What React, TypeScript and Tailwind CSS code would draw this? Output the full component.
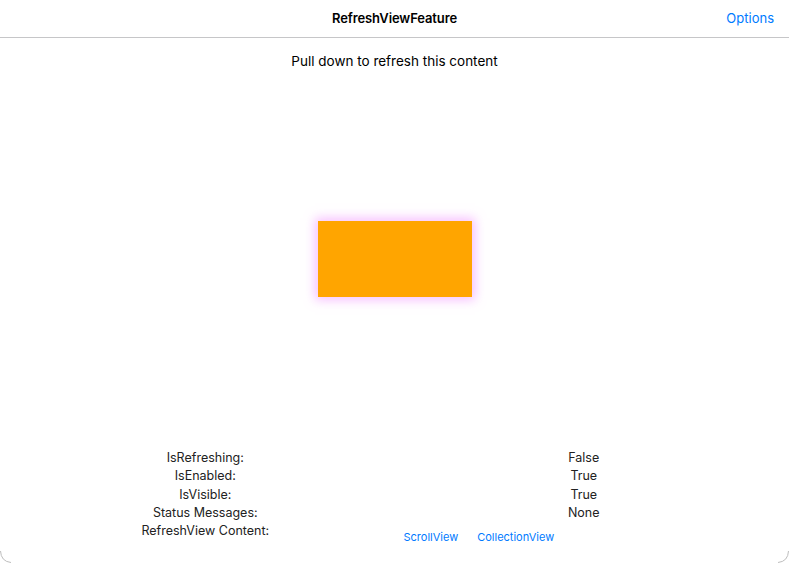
import React from "react";

export default function App() {
  const rows: [string, string][] = [
    ["IsRefreshing:", "False"],
    ["IsEnabled:", "True"],
    ["IsVisible:", "True"],
    ["Status Messages:", "None"],
  ];
  return (
    <div
      className="relative w-[789px] h-[563px] bg-white overflow-hidden flex flex-col text-[#1c1c1e]"
      style={{ fontFamily: "Inter, 'Liberation Sans', sans-serif" }}
    >
      <div className="h-[38px] shrink-0 border-b border-[#c6c6c8] flex items-center relative">
        <div className="absolute inset-0 flex items-center justify-center">
          <span className="text-[13px] font-semibold text-black tracking-[-0.1px]">RefreshViewFeature</span>
        </div>
        <div className="ml-auto pr-[15px] text-[13px] text-[#007aff]">Options</div>
      </div>
      <div className="mt-[14px] text-center text-[13.5px] leading-[18px] text-black">
        Pull down to refresh this content
      </div>
      <div className="mt-[151px] flex justify-center">
        <div className="w-[154px] h-[76px] bg-[#ffa500] shadow-[0_0_10px_3px_rgba(240,140,255,0.55)]" />
      </div>
      <div className="mt-[152px] px-4 grid grid-cols-2 text-[12.5px] text-[#222]">
        {rows.map(([l, v]) => (
          <React.Fragment key={l}>
            <div className="h-[18.3px] leading-[18.3px] text-center">{l}</div>
            <div className="h-[18.3px] leading-[18.3px] text-center">{v}</div>
          </React.Fragment>
        ))}
        <div className="h-[18.3px] leading-[18.3px] text-center">RefreshView Content:</div>
        <div className="flex items-center h-[30px] pl-[9px] gap-[19px] text-[11px] text-[#007aff]">
          <span>ScrollView</span>
          <span>CollectionView</span>
        </div>
      </div>
      <svg className="absolute left-0 bottom-0" width="14" height="14" viewBox="0 0 14 14">
        <path d="M0.5 2 Q1 12.5 11 13.5" fill="none" stroke="#bdbdbd" strokeWidth="1" />
      </svg>
      <svg className="absolute right-0 bottom-0" width="14" height="14" viewBox="0 0 14 14">
        <path d="M13.5 2 Q13 12.5 3 13.5" fill="none" stroke="#bdbdbd" strokeWidth="1" />
      </svg>
    </div>
  );
}
